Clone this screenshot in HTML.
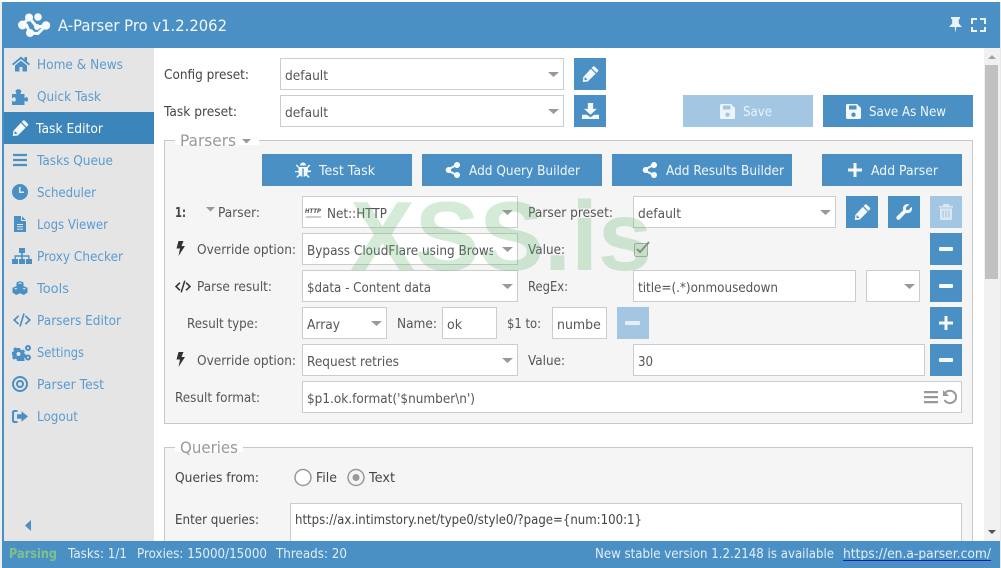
<!DOCTYPE html>
<html><head><meta charset="utf-8"><title>A-Parser Pro</title>
<style>
html,body{margin:0;padding:0;background:#fff;overflow:hidden}
svg{display:block}
text{font-family:"DejaVu Sans","Liberation Sans",sans-serif;font-size:12.9px;fill:#555}
.side{fill:#5a9bd0;font-size:13px}
.w{fill:#f2f7fb}
.dk{fill:#444}
.f{fill:#fff;stroke:#ccc;stroke-width:1}
.b{fill:#4b90c5}
.d{fill:#a3c7e2}
.fs{fill:#f5f5f5;stroke:#c8c8c8;stroke-width:1}
.lg{font-size:16px;fill:#999}
.st{fill:#e3eef6;font-size:12.9px}
</style></head><body>
<svg width="1001" height="568" viewBox="0 0 1001 568" xmlns="http://www.w3.org/2000/svg">
<defs>
<symbol id="home" viewBox="0 0 18 16"><path d="M9 0.5L0 8l1.2 1.4L9 3l7.8 6.4L18 8l-3-2.5V1h-2.500v2.400zM3 9.500V15.500h4.500v-4.500h3v4.500H15V9.500L9 4.600z"/></symbol>
<symbol id="puzzle" viewBox="0 0 16 16"><path d="M0 5h4.500C4 3.500 3.600 3 3.600 2.200 3.600 1 5 .2 6.500 .2S9.300 1 9.300 2.200c0 .8-.6 1.300-.9 2.800H12.500v4c1.200-.4 1.600-.9 2.200-.9 1 0 1.300 1.100 1.300 2.200s-.3 2.300-1.300 2.300c-.6 0-1-.5-2.200-.9V16H0v-4.200c1.200.4 1.600.9 2.200.9 1 0 1.600-1 1.600-2.200S3.200 8.300 2.200 8.300C1.600 8.300 1.200 8.800 0 9.200z"/></symbol>
<symbol id="pencil" viewBox="0 0 16 16"><path d="M12.200 .6l3.200 3.200c.5.5.5 1.200 0 1.700l-1.400 1.400-4.900-4.900L10.500 .6c.5-.5 1.200-.5 1.700 0zM8.300 2.900l4.800 4.800-7.800 7.800-5 .5.500-5zM2.300 11l-.4 3.100 3.100-.4z" fill-rule="evenodd"/></symbol>
<symbol id="bars" viewBox="0 0 16 16"><path d="M0 1h16v2.600H0zM0 6.700h16v2.600H0zM0 12.400h16V15H0z"/></symbol>
<symbol id="clock" viewBox="0 0 16 16"><path fill-rule="evenodd" d="M8 0a8 8 0 1 1 0 16A8 8 0 0 1 8 0zM7 3v6h5V7.500H8.600V3z"/></symbol>
<symbol id="file" viewBox="0 0 12 16"><path fill-rule="evenodd" d="M0 0h7v5h5v11H0zM8 .3L11.700 4H8zM3 8v1h6V8zM3 10.300v1h6v-1zM3 12.600v1h6v-1z"/></symbol>
<symbol id="net" viewBox="0 0 20 16"><path d="M7 0h6v5h-2.200v2.200H17.500V11H20v5h-6v-5h2.200V8.700H10.800V11H13v5H7v-5h2.200V8.700H3.800V11H6v5H0v-5h2.500V7.200H9.200V5H7z"/></symbol>
<symbol id="tools" viewBox="0 0 16 14"><path fill-rule="evenodd" d="M8 0l3.500 1.500v3.600L15.500 6.800v4.700L11.800 14 8 12.300 4.200 14 .5 11.500V6.800L4.500 5.100V1.500zM8 1.400L6 2.200 8 3l2-.8zM3.800 7l-1.700.7 1.700.8 1.700-.8zM12.200 7l-1.700.7 1.700.8 1.700-.8z"/></symbol>
<symbol id="code" viewBox="0 0 20 14"><path d="M6 2.200L7.200 3.400 3.500 7l3.700 3.600L6 11.800 1 7zM14 2.200L19 7l-5 4.800-1.200-1.200L16.500 7l-3.700-3.600zM11.200 .3l1.600.4-4 13-1.600-.4z"/></symbol>
<symbol id="gears" viewBox="0 0 20 16"><path fill-rule="evenodd" d="M5 3h3l.4 1.500 1.500.7 1.300-.8 1.800 2-.8 1.300.5 1.300 1.300.5v2.700l-1.400.4-.5 1.300.8 1.300-2 1.900-1.300-.8-1.400.5L8 16H5l-.3-1.600-1.400-.6-1.300.8L0 12.700l.8-1.300-.5-1.400L0 9.800V7l1.400-.4.500-1.300L1.100 4l2-1.800 1.300.8zM6.500 7a2 2 0 1 0 0 4 2 2 0 0 0 0-4z"/><path fill-rule="evenodd" d="M16 0a3 3 0 1 1 0 6 3 3 0 0 1 0-6zM16 2a1 1 0 1 0 0 2 1 1 0 0 0 0-2zM16 9.500a3 3 0 1 1 0 6 3 3 0 0 1 0-6zM16 11.500a1 1 0 1 0 0 2 1 1 0 0 0 0-2z"/></symbol>
<symbol id="target" viewBox="0 0 16 16"><path fill-rule="evenodd" d="M8 0a8 8 0 1 1 0 16A8 8 0 0 1 8 0zM8 2a6 6 0 1 0 0 12A6 6 0 0 0 8 2zM8 4a4 4 0 1 1 0 8 4 4 0 0 1 0-8zM8 6a2 2 0 1 0 0 4 2 2 0 0 0 0-4z"/></symbol>
<symbol id="logout" viewBox="0 0 16 13"><path d="M0 2.500C0 1 1 0 2.500 0H5.500v2H3C2.300 2 2 2.300 2 3v7c0 .7.300 1 1 1h2.500v2H2.500C1 13 0 12 0 10.500zM9.500 1.200L16 6.500l-6.500 5.300V8.700H5V4.300h4.500z"/></symbol>
<symbol id="disk" viewBox="0 0 15 15"><path fill-rule="evenodd" d="M0 1.500C0 .6.600 0 1.500 0H11l4 4v9.500c0 .9-.6 1.500-1.500 1.500h-12C.6 15 0 14.400 0 13.500zM3 1.500V5.500h7.500V1.500zM7.500 8.500a2.200 2.200 0 1 0 0 4.400 2.200 2.200 0 0 0 0-4.400z"/></symbol>
<symbol id="dl" viewBox="0 0 16 15"><path d="M5.500 0h5v5.500H14L8 11 2 5.500h3.500zM0 11h4.500L8 13.500 11.500 11H16v4H0z"/></symbol>
<symbol id="bug" viewBox="0 0 16 16"><path d="M5 3.500C5 1.800 6.300.5 8 .5s3 1.300 3 3zM1.800 2.500L4.300 5h7.400l2.500-2.500 1.100 1.100-2.300 2.300v2.600H16v1.600h-3.500c0 .9-.2 1.600-.5 2.100l2.600 2.600-1.100 1.100-2.500-2.400c-.7.700-1.500 1.100-2.300 1.200V6.500h-1.400v8.200c-.8-.1-1.600-.5-2.300-1.200l-2.500 2.400-1.100-1.100 2.600-2.600c-.3-.5-.5-1.200-.5-2.100H0V9h3.500V5.900L.7 3.600z"/></symbol>
<symbol id="share" viewBox="0 0 15 16"><path d="M12 0a3 3 0 1 1-2.200 5L5.900 7.100a3 3 0 0 1 0 1.800L9.800 11A3 3 0 1 1 9 13l0-.2L5 10.700a3 3 0 1 1 0-5.400L9 3.200A3 3 0 0 1 12 0z"/></symbol>
<symbol id="wrench" viewBox="0 0 16 16"><path d="M11.500 0c.7 0 1.300.1 1.800.4L10 3.500v2.500h2.500l3.100-3.100c.3.500.4 1.100.4 1.800 0 2.500-2 4.500-4.500 4.500-.6 0-1.100-.1-1.600-.3l-6 6.300c-.8.800-2.100.8-2.900 0s-.8-2.100 0-2.900l6.200-6c-.2-.6-.2-1.100-.2-1.800C7 2 9 0 11.500 0z"/></symbol>
<symbol id="trash" viewBox="0 0 14 16"><path fill-rule="evenodd" d="M4.500 0h5L10.500 2H14v1.500H0V2h3.500zM1 4.500h12V14.500c0 .9-.6 1.500-1.500 1.500h-9C1.600 16 1 15.400 1 14.500zM3.500 6.500v7h1.200v-7zM6.400 6.500v7h1.200v-7zM9.300 6.500v7h1.200v-7z"/></symbol>
<symbol id="bolt" viewBox="0 0 9 15"><path d="M2.500 0h5L5.500 5H9L2.500 15 4 7.500H.5z"/></symbol>
<symbol id="pin" viewBox="0 0 13 16"><path d="M2 0h9v1.500L9.800 2.500V6.500L13 10H7.300L6.500 16l-.8-6H0l3.200-3.500V2.500L2 1.500z"/></symbol>
</defs>

<!-- frame -->
<rect x="0" y="0" width="1001" height="568" fill="#fff"/>
<rect x="0" y="2" width="2" height="566" fill="#eee"/>
<rect x="2" y="2" width="998" height="46" class="b"/>
<rect x="2" y="48" width="2" height="500" class="b"/>
<rect x="4" y="48" width="150" height="493" fill="#e5e5e5"/>
<rect x="4" y="112" width="150" height="32" fill="#3c85ba"/>
<rect x="1000" y="2" width="1" height="566" fill="#e8e8e8"/>

<!-- header -->
<g fill="#f7fafc" stroke="none">
<circle cx="22.500" cy="25" r="4.500"/><circle cx="29" cy="17.500" r="4"/><circle cx="38" cy="17" r="3.800"/><circle cx="46" cy="25.500" r="4.200"/><circle cx="30" cy="33" r="4"/><circle cx="37" cy="27" r="3"/>
<path d="M22.500 25L29 17.500L37 27L46 25.500L38 33.500L30 33L26 24" fill="none" stroke="#f7fafc" stroke-width="3"/>
</g>
<text x="58" y="31" style="font-size:16px;fill:#f4f8fb" textLength="169" lengthAdjust="spacingAndGlyphs">A-Parser Pro v1.2.2062</text>
<use href="#pin" x="949" y="17" width="13" height="16" fill="#e9f3f8"/>
<path d="M972 24v-5h5M980 19h5v5M985 27v4h-5M977 31h-5v-4" fill="none" stroke="#e9f3f8" stroke-width="2"/>

<!-- sidebar -->
<g fill="#4b90c5">
<use href="#home" x="12" y="56" width="18" height="16"/>
<use href="#puzzle" x="12" y="89" width="16" height="16"/>
<use href="#pencil" x="12" y="120" width="17" height="16" fill="#f5f9fc"/>
<use href="#bars" x="13" y="152" width="14" height="16"/>
<use href="#clock" x="12" y="184" width="16" height="16"/>
<use href="#file" x="14" y="216" width="12" height="16"/>
<use href="#net" x="12" y="248" width="20" height="16"/>
<use href="#tools" x="12" y="281" width="16" height="14"/>
<use href="#code" x="12" y="313" width="20" height="14"/>
<use href="#gears" x="12" y="345" width="20" height="16"/>
<use href="#target" x="12" y="376" width="16" height="16"/>
<use href="#logout" x="12" y="410" width="16" height="13"/>
<path d="M31 520v11l-6-5.500z"/>
</g>
<text class="side" x="37" y="69" textLength="86" lengthAdjust="spacingAndGlyphs">Home &amp; News</text>
<text class="side" x="37" y="101" textLength="64" lengthAdjust="spacingAndGlyphs">Quick Task</text>
<text class="side" x="36" y="133" textLength="67" lengthAdjust="spacingAndGlyphs" style="fill:#fff">Task Editor</text>
<text class="side" x="37" y="165" textLength="76" lengthAdjust="spacingAndGlyphs">Tasks Queue</text>
<text class="side" x="37" y="197" textLength="59" lengthAdjust="spacingAndGlyphs">Scheduler</text>
<text class="side" x="37" y="229" textLength="71" lengthAdjust="spacingAndGlyphs">Logs Viewer</text>
<text class="side" x="37" y="261" textLength="86" lengthAdjust="spacingAndGlyphs">Proxy Checker</text>
<text class="side" x="37" y="293" textLength="32" lengthAdjust="spacingAndGlyphs">Tools</text>
<text class="side" x="37" y="325" textLength="84" lengthAdjust="spacingAndGlyphs">Parsers Editor</text>
<text class="side" x="37" y="357" textLength="47" lengthAdjust="spacingAndGlyphs">Settings</text>
<text class="side" x="37" y="389" textLength="67" lengthAdjust="spacingAndGlyphs">Parser Test</text>
<text class="side" x="37" y="421" textLength="41" lengthAdjust="spacingAndGlyphs">Logout</text>

<!-- scrollbar -->
<rect x="984" y="48" width="16" height="493" fill="#f1f1f1"/>
<rect x="985" y="65" width="13" height="214" fill="#c1c1c1"/>
<path d="M988 59l4-4 4 4z" fill="#a3a3a3"/>
<path d="M988 530l4 4 4-4z" fill="#505050"/>

<!-- presets -->
<text x="164" y="79" class="dk" textLength="85" lengthAdjust="spacingAndGlyphs">Config preset:</text>
<text x="164" y="116" class="dk" textLength="73" lengthAdjust="spacingAndGlyphs">Task preset:</text>
<rect class="f" x="280.500" y="58.500" width="283" height="31"/>
<rect class="f" x="280.500" y="95.500" width="283" height="31"/>
<text x="285" y="80" textLength="43" lengthAdjust="spacingAndGlyphs">default</text>
<text x="285" y="117" textLength="43" lengthAdjust="spacingAndGlyphs">default</text>
<path d="M548 72h11l-5.500 5z M548 109h11l-5.500 5z" fill="#999"/>
<rect class="b" x="574" y="58" width="32" height="32"/>
<rect class="b" x="574" y="95" width="32" height="32"/>
<use href="#pencil" x="582" y="66" width="17" height="16" fill="#f5f9fc"/>
<use href="#dl" x="582" y="103" width="17" height="16" fill="#f5f9fc"/>
<rect class="d" x="683" y="95" width="130" height="32"/>
<rect class="b" x="823" y="95" width="150" height="32"/>
<use href="#disk" x="720" y="104" width="15" height="15" fill="#eef5fa"/>
<use href="#disk" x="846" y="104" width="15" height="15" fill="#f5f9fc"/>
<text x="743" y="116" class="w" textLength="29" lengthAdjust="spacingAndGlyphs" style="fill:#e9f2f8">Save</text>
<text x="869" y="116" class="w" textLength="77" lengthAdjust="spacingAndGlyphs">Save As New</text>

<!-- parsers fieldset -->
<rect class="fs" x="164.500" y="140.500" width="808" height="283"/>
<rect x="175" y="135" width="84" height="10" fill="#fff"/>
<text x="180" y="146" class="lg" textLength="56" lengthAdjust="spacingAndGlyphs">Parsers</text>
<path d="M242 139h9l-4.500 4.500z" fill="#999"/>

<g class="btns">
<rect class="b" x="262" y="154" width="150" height="32"/>
<rect class="b" x="422" y="154" width="180" height="32"/>
<rect class="b" x="612" y="154" width="180" height="32"/>
<rect class="b" x="822" y="154" width="140" height="32"/>
</g>
<use href="#bug" x="295" y="162" width="16" height="16" fill="#f5f9fc"/>
<use href="#share" x="445" y="162" width="15" height="16" fill="#f5f9fc"/>
<use href="#share" x="642" y="162" width="15" height="16" fill="#f5f9fc"/>
<path d="M848 168.500h5.500V163h3v5.500h5.500v3h-5.500v5.500h-3v-5.500H848z" fill="#f5f9fc"/>
<text x="319" y="175" class="w" textLength="56" lengthAdjust="spacingAndGlyphs">Test Task</text>
<text x="469" y="175" class="w" textLength="111" lengthAdjust="spacingAndGlyphs">Add Query Builder</text>
<text x="666" y="175" class="w" textLength="118" lengthAdjust="spacingAndGlyphs">Add Results Builder</text>
<text x="871" y="175" class="w" textLength="67" lengthAdjust="spacingAndGlyphs">Add Parser</text>

<!-- row 1 -->
<text x="175" y="217" style="font-weight:bold;fill:#444" textLength="11" lengthAdjust="spacingAndGlyphs">1:</text>
<path d="M206 207h9l-4.500 4.500z" fill="#999"/>
<text x="218" y="217" textLength="42" lengthAdjust="spacingAndGlyphs">Parser:</text>
<rect class="f" x="302.500" y="196.500" width="215" height="31"/>
<text x="305" y="213" style="font-size:6.500px;font-weight:bold;font-style:italic;fill:#555" textLength="16" lengthAdjust="spacingAndGlyphs">HTTP</text>
<path d="M306 217h15" stroke="#bbb" stroke-width="1.500"/>
<text x="327" y="218" textLength="60" lengthAdjust="spacingAndGlyphs">Net::HTTP</text>
<path d="M502 210h11l-5.500 5z" fill="#999"/>
<text x="528" y="217" textLength="85" lengthAdjust="spacingAndGlyphs">Parser preset:</text>
<rect class="f" x="633.500" y="196.500" width="202" height="31"/>
<text x="638" y="218" textLength="43" lengthAdjust="spacingAndGlyphs">default</text>
<path d="M820 210h11l-5.500 5z" fill="#999"/>
<rect class="b" x="846" y="196" width="32" height="32"/>
<rect class="b" x="888" y="196" width="32" height="32"/>
<rect class="d" x="930" y="196" width="32" height="32"/>
<use href="#pencil" x="854" y="204" width="17" height="16" fill="#f5f9fc"/>
<use href="#wrench" x="896" y="204" width="16" height="16" fill="#f5f9fc"/>
<use href="#trash" x="939" y="204" width="14" height="16" fill="#dbe8f2"/>

<!-- row 2 -->
<use href="#bolt" x="176" y="241" width="9" height="15" fill="#333"/>
<text x="197" y="254" textLength="99" lengthAdjust="spacingAndGlyphs">Override option:</text>
<rect class="f" x="302.500" y="233.500" width="215" height="31"/>
<clipPath id="c1"><rect x="303" y="234" width="190" height="30"/></clipPath>
<text x="307" y="255" textLength="188" lengthAdjust="spacingAndGlyphs" clip-path="url(#c1)">Bypass CloudFlare using Brows</text>
<path d="M502 247h11l-5.500 5z" fill="#999"/>
<text x="528" y="254" textLength="37" lengthAdjust="spacingAndGlyphs">Value:</text>
<rect x="634.500" y="243.500" width="13" height="13" rx="2" fill="#eee" stroke="#aaa"/>
<path d="M637 249l3 3 9-10" fill="none" stroke="#888" stroke-width="2"/>

<!-- row 3 -->
<use href="#code" x="174" y="280" width="18" height="13" fill="#333"/>
<text x="197" y="291" textLength="75" lengthAdjust="spacingAndGlyphs">Parse result:</text>
<rect class="f" x="302.500" y="270.500" width="215" height="31"/>
<text x="307" y="292" textLength="124" lengthAdjust="spacingAndGlyphs">$data - Content data</text>
<path d="M502 284h11l-5.500 5z" fill="#999"/>
<text x="528" y="291" textLength="40" lengthAdjust="spacingAndGlyphs">RegEx:</text>
<rect class="f" x="633.500" y="270.500" width="222" height="31"/>
<text x="638" y="292" textLength="140" lengthAdjust="spacingAndGlyphs">title=(.*)onmousedown</text>
<rect class="f" x="866.500" y="270.500" width="53" height="31"/>
<path d="M904 284h11l-5.500 5z" fill="#999"/>

<!-- row 4 -->
<text x="187" y="328" textLength="71" lengthAdjust="spacingAndGlyphs">Result type:</text>
<rect class="f" x="302.500" y="307.500" width="84" height="31"/>
<text x="307" y="329" textLength="33" lengthAdjust="spacingAndGlyphs">Array</text>
<path d="M371 321h11l-5.500 5z" fill="#999"/>
<text x="397" y="328" textLength="40" lengthAdjust="spacingAndGlyphs">Name:</text>
<rect class="f" x="442.500" y="307.500" width="54" height="31"/>
<text x="447" y="329" textLength="15" lengthAdjust="spacingAndGlyphs">ok</text>
<text x="507" y="328" textLength="34" lengthAdjust="spacingAndGlyphs">$1 to:</text>
<rect class="f" x="552.500" y="307.500" width="54" height="31"/>
<clipPath id="c2"><rect x="553" y="308" width="49" height="30"/></clipPath>
<text x="557" y="329" textLength="49" lengthAdjust="spacingAndGlyphs" clip-path="url(#c2)">number</text>
<rect class="d" x="617" y="307" width="32" height="32"/>
<rect x="625" y="321" width="15" height="4" rx="1" fill="#e3eef6"/>

<!-- row 5 -->
<use href="#bolt" x="176" y="352" width="9" height="15" fill="#333"/>
<text x="197" y="365" textLength="99" lengthAdjust="spacingAndGlyphs">Override option:</text>
<rect class="f" x="302.500" y="344.500" width="215" height="31"/>
<text x="307" y="366" textLength="92" lengthAdjust="spacingAndGlyphs">Request retries</text>
<path d="M502 358h11l-5.500 5z" fill="#999"/>
<text x="528" y="365" textLength="37" lengthAdjust="spacingAndGlyphs">Value:</text>
<rect class="f" x="633.500" y="344.500" width="291" height="31"/>
<text x="638" y="366" textLength="15" lengthAdjust="spacingAndGlyphs">30</text>

<!-- right stack buttons -->
<rect class="b" x="930" y="233" width="32" height="32"/>
<rect class="b" x="930" y="270" width="32" height="32"/>
<rect class="b" x="930" y="307" width="32" height="32"/>
<rect class="b" x="930" y="344" width="32" height="32"/>
<g fill="#f5f9fc">
<rect x="939" y="247" width="14" height="4" rx="1"/>
<rect x="939" y="284" width="14" height="4" rx="1"/>
<path d="M939 321.500h5.500V316h3v5.500h5.500v3h-5.500v5.500h-3v-5.500H939z"/>
<rect x="939" y="358" width="14" height="4" rx="1"/>
</g>

<!-- row 6 -->
<text x="175" y="402" textLength="85" lengthAdjust="spacingAndGlyphs">Result format:</text>
<rect class="f" x="302.500" y="381.500" width="659" height="31"/>
<text x="307" y="403" textLength="168" lengthAdjust="spacingAndGlyphs">$p1.ok.format('$number\n')</text>
<path d="M924 391h14v2.200h-14zM924 396h14v2.200h-14zM924 401h14v2.200h-14z" fill="#999"/>
<path d="M945.500 392.500a6.200 6.200 0 1 1-1 7.500" fill="none" stroke="#999" stroke-width="2"/>
<path d="M943 390v6h6z" fill="#999"/>

<!-- queries -->
<rect class="fs" x="164.500" y="447.500" width="808" height="130"/>
<rect x="175" y="442" width="68" height="10" fill="#fff"/>
<text x="180" y="453" class="lg" textLength="58" lengthAdjust="spacingAndGlyphs">Queries</text>
<text x="175" y="482" class="dk" textLength="84" lengthAdjust="spacingAndGlyphs">Queries from:</text>
<circle cx="303" cy="477.500" r="8" fill="#fff" stroke="#999" stroke-width="1.500"/>
<text x="316" y="482" class="dk" textLength="21" lengthAdjust="spacingAndGlyphs">File</text>
<circle cx="356" cy="477.500" r="8" fill="#f5f5f5" stroke="#999" stroke-width="1.500"/>
<circle cx="356" cy="477.500" r="3.500" fill="#999"/>
<text x="369" y="482" class="dk" textLength="26" lengthAdjust="spacingAndGlyphs">Text</text>
<text x="175" y="524" class="dk" textLength="84" lengthAdjust="spacingAndGlyphs">Enter queries:</text>
<rect class="f" x="290.500" y="503.500" width="671" height="60"/>
<text x="295" y="524" class="dk" textLength="347" lengthAdjust="spacingAndGlyphs">https://ax.intimstory.net/type0/style0/?page={num:100:1}</text>

<!-- watermark -->
<text x="350" y="270" textLength="302" lengthAdjust="spacingAndGlyphs" style="font-family:'Liberation Sans',sans-serif;font-weight:bold;font-size:98px;fill:#5cb56a;fill-opacity:.27">XSS.is</text>

<!-- status bar -->
<rect x="2" y="541" width="998" height="27" class="b"/>
<text x="9" y="558" textLength="48" lengthAdjust="spacingAndGlyphs" style="font-weight:bold;fill:#7fc18a;font-size:12.900px">Parsing</text>
<text x="68" y="558" class="st" textLength="59" lengthAdjust="spacingAndGlyphs">Tasks: 1/1</text>
<text x="137" y="558" class="st" textLength="130" lengthAdjust="spacingAndGlyphs">Proxies: 15000/15000</text>
<text x="276" y="558" class="st" textLength="71" lengthAdjust="spacingAndGlyphs">Threads: 20</text>
<text x="595" y="558" class="st" textLength="239" lengthAdjust="spacingAndGlyphs">New stable version 1.2.2148 is available</text>
<text x="843" y="558" class="st" textLength="148" lengthAdjust="spacingAndGlyphs">https://en.a-parser.com/</text>
<rect x="843" y="560" width="148" height="1" fill="#0f1fb5"/>
</svg>
</body></html>
